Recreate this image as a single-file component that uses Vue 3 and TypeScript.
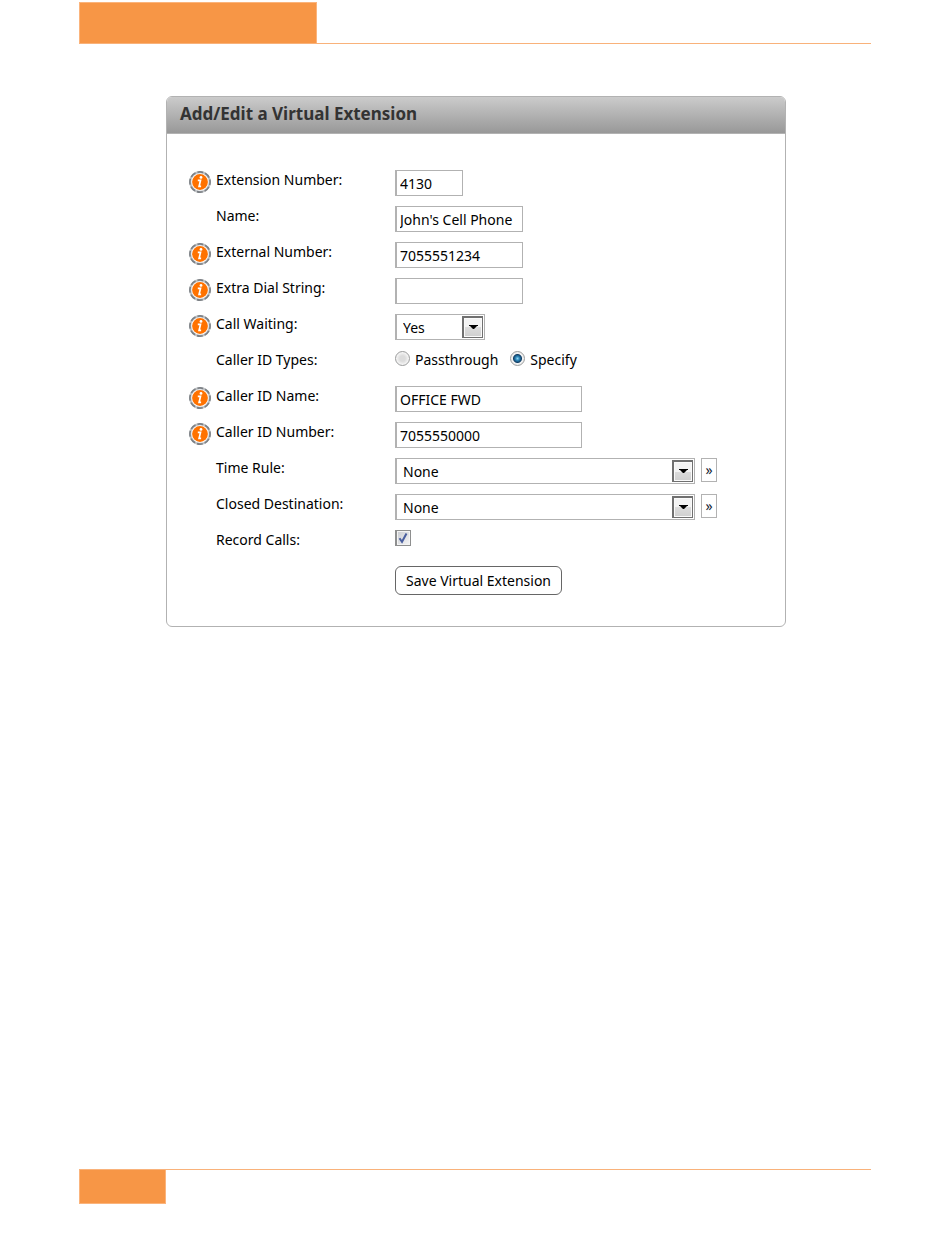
<script setup lang="ts">
import { ref } from 'vue'

interface Row {
  id: string
  label: string
  info: boolean
  kind: 'text' | 'select' | 'radio' | 'check'
  size?: string
  link?: boolean
  options?: string[]
}

const rows: Row[] = [
  { id: 'extension', label: 'Extension Number:', info: true, kind: 'text', size: 'short' },
  { id: 'name', label: 'Name:', info: false, kind: 'text', size: 'medium' },
  { id: 'external', label: 'External Number:', info: true, kind: 'text', size: 'medium' },
  { id: 'dial', label: 'Extra Dial String:', info: true, kind: 'text', size: 'medium' },
  { id: 'waiting', label: 'Call Waiting:', info: true, kind: 'select', size: 'narrow', options: ['Yes'] },
  { id: 'types', label: 'Caller ID Types:', info: false, kind: 'radio', options: ['Passthrough', 'Specify'] },
  { id: 'cidName', label: 'Caller ID Name:', info: true, kind: 'text', size: 'long' },
  { id: 'cidNumber', label: 'Caller ID Number:', info: true, kind: 'text', size: 'long' },
  { id: 'timeRule', label: 'Time Rule:', info: false, kind: 'select', size: 'wide', link: true, options: ['None'] },
  { id: 'closed', label: 'Closed Destination:', info: false, kind: 'select', size: 'wide', link: true, options: ['None'] },
  { id: 'record', label: 'Record Calls:', info: false, kind: 'check' },
]

const values = ref<Record<string, string>>({
  extension: '4130',
  name: "John's Cell Phone",
  external: '7055551234',
  dial: '',
  waiting: 'Yes',
  types: 'Specify',
  cidName: 'OFFICE FWD',
  cidNumber: '7055550000',
  timeRule: 'None',
  closed: 'None',
})
const recordCalls = ref(true)
</script>

<template>
  <div class="page">
    <header class="page-head"><div class="head-block"></div></header>

    <main>
      <form class="panel" @submit.prevent>
        <h1>Add/Edit a Virtual Extension</h1>
        <div class="fields">
          <div v-for="row in rows" :key="row.id" class="row">
            <span class="info">
              <svg v-if="row.info" width="22" height="22" viewBox="0 0 22 22" aria-hidden="true">
                <circle cx="11" cy="11" r="9.8" fill="#fff" stroke="#c0c3c6" stroke-width="2.2" />
                <circle cx="11" cy="11" r="10.1" fill="none" stroke="#7c8085" stroke-width="1.6" stroke-dasharray="5.9 2.03" stroke-dashoffset="2.9" />
                <circle cx="11" cy="11" r="7.9" fill="#ff7200" />
                <circle cx="12" cy="6.4" r="1.4" fill="#fff" />
                <path d="M8.8 9.4h2.7l-1.4 6h2" fill="none" stroke="#fff" stroke-width="1.7" />
              </svg>
            </span>
            <span v-if="row.kind === 'radio'" :id="row.id" class="label">{{ row.label }}</span>
            <label v-else :for="row.id" class="label">{{ row.label }}</label>

            <input v-if="row.kind === 'text'" :id="row.id" v-model="values[row.id]" type="text" :class="['box', row.size]" />
            <div v-else-if="row.kind === 'select'" class="control">
              <span :class="['select', row.size]">
                <select :id="row.id" v-model="values[row.id]" class="box">
                  <option v-for="option in row.options" :key="option">{{ option }}</option>
                </select>
                <span class="arrow">
                  <svg width="9" height="5" viewBox="0 0 9 5" aria-hidden="true"><path d="M0 0h9v1H8L5 4H4L1 1H0z" fill="#000" /></svg>
                </span>
              </span>
              <button v-if="row.link" type="button" class="more">»</button>
            </div>
            <div v-else-if="row.kind === 'radio'" class="radios" role="radiogroup" :aria-labelledby="row.id">
              <label v-for="option in row.options" :key="option">
                <input v-model="values[row.id]" type="radio" :name="row.id" :value="option" />{{ option }}
              </label>
            </div>
            <span v-else class="check">
              <input :id="row.id" v-model="recordCalls" type="checkbox" />
              <svg width="16" height="16" viewBox="0 0 16 16" aria-hidden="true">
                <path v-if="recordCalls" d="M4.5 8.2L7 11.8L11.5 3.5" fill="none" stroke="#4a5f9f" stroke-width="2" />
              </svg>
            </span>
          </div>
          <button type="submit" class="save">Save Virtual Extension</button>
        </div>
      </form>
    </main>

    <footer class="page-foot"><div class="foot-block"></div></footer>
  </div>
</template>

<style>
body {
  margin: 0;
  background: #fff;
}
</style>

<style scoped>
.page {
  box-sizing: border-box;
  min-height: 100vh;
  padding: 2px 79px 44px;
  display: flex;
  flex-direction: column;
  color: #000;
  font: 14px/20px "Noto Sans", sans-serif;
}
.page-head {
  border-bottom: 1px solid #f9b27a;
}
.head-block,
.foot-block {
  box-sizing: border-box;
  background: #f79646;
  border: 1px solid #fbb47c;
}
.head-block {
  width: 30%;
  height: 41px;
  border-bottom: 0;
}
.page-foot {
  border-top: 1px solid #f9b27a;
}
.foot-block {
  width: 11%;
  height: 34px;
  border-top: 0;
}
main {
  flex: 1;
  padding: 52px 85px 0 87px;
}
.panel {
  border: 1px solid #b2b2b2;
  border-radius: 6px;
  overflow: hidden;
}
h1 {
  margin: 0;
  padding: 6px 13px 9px;
  border-bottom: 1px solid #b2b2b2;
  background: linear-gradient(#cbcbcb, #989898);
  color: #333;
  font-size: 17px;
  line-height: 21px;
}
.fields {
  padding: 36px 22px 31px;
}
.row {
  display: grid;
  grid-template-columns: 27px 179px 1fr;
  align-items: start;
  height: 36px;
}
.info svg {
  display: block;
  margin-top: 1px;
}
.box {
  box-sizing: border-box;
  height: 26px;
  margin: 0;
  padding: 0 3px;
  border: 1px solid #b2b2b2;
  border-left-width: 2px;
  border-radius: 0;
  background: #fff;
  color: #000;
  font: inherit;
  appearance: none;
}
.short {
  width: 68px;
}
.medium {
  width: 128px;
}
.long {
  width: 187px;
}
.narrow {
  width: 90px;
}
.wide {
  width: 300px;
}
.control {
  display: flex;
  gap: 6px;
}
.select {
  position: relative;
  display: flex;
}
.select .box {
  width: 100%;
  padding: 1px 26px 0 6px;
}
.arrow {
  position: absolute;
  top: 2px;
  right: 2px;
  box-sizing: border-box;
  width: 21px;
  height: 22px;
  display: flex;
  align-items: center;
  justify-content: center;
  border: 1px solid #707070;
  border-width: 2px 1px 1px 2px;
  background: linear-gradient(#f3f3f3 50%, #dcdcdc 50%, #cfcfcf);
  box-shadow: inset 0 0 0 1px #fafafa;
  pointer-events: none;
}
.more {
  width: 16px;
  height: 24px;
  padding: 0;
  border: 1px solid #b2b2b2;
  background: #fff;
  color: #123;
  font: inherit;
  line-height: 20px;
}
.radios {
  display: flex;
  gap: 12px;
}
.radios label {
  display: flex;
  gap: 5px;
}
.radios input {
  box-sizing: border-box;
  width: 15px;
  height: 15px;
  margin: 1px 0 0;
  border: 1px solid #9a9b9b;
  border-radius: 50%;
  background: radial-gradient(circle, #dcdcdc 30%, #f4f4f4 65%);
  appearance: none;
}
.radios input:checked {
  background: radial-gradient(circle at 50% 50%, #8fd4f2 0, #2b85b8 2px, #123f66 4px, #f0f0f0 5px);
}
.check {
  position: relative;
  width: 16px;
  height: 16px;
}
.check input {
  box-sizing: border-box;
  display: block;
  width: 16px;
  height: 16px;
  margin: 0;
  border: 1px solid #8e8f8f;
  border-left-width: 2px;
  background: linear-gradient(135deg, #c9ccd2, #f6f6f6);
  box-shadow: inset 0 0 0 1px #f4f4f4;
  appearance: none;
}
.check svg {
  position: absolute;
  inset: 0;
  pointer-events: none;
}
.save {
  display: block;
  height: 29px;
  margin-left: 206px;
  padding: 0 10px;
  border: 1px solid #666;
  border-radius: 6px;
  background: #fff;
  color: #000;
  font: inherit;
}
</style>
